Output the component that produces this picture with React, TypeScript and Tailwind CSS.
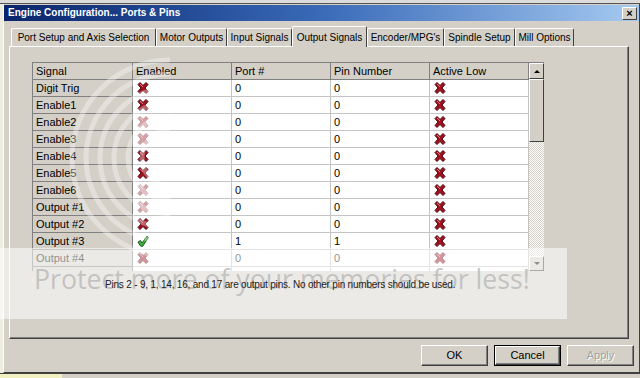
import React from 'react'

type Row = { signal: string; enabled: 'x' | 'ok' | ''; port: string; pin: string; pale?: boolean }

const rows: Row[] = [
  { signal: 'Digit  Trig', enabled: 'x', port: '0', pin: '0' },
  { signal: 'Enable1', enabled: 'x', port: '0', pin: '0' },
  { signal: 'Enable2', enabled: 'x', port: '0', pin: '0', pale: true },
  { signal: 'Enable3', enabled: 'x', port: '0', pin: '0', pale: true },
  { signal: 'Enable4', enabled: 'x', port: '0', pin: '0' },
  { signal: 'Enable5', enabled: 'x', port: '0', pin: '0' },
  { signal: 'Enable6', enabled: 'x', port: '0', pin: '0', pale: true },
  { signal: 'Output #1', enabled: 'x', port: '0', pin: '0', pale: true },
  { signal: 'Output #2', enabled: 'x', port: '0', pin: '0' },
  { signal: 'Output #3', enabled: 'ok', port: '1', pin: '1' },
  { signal: 'Output #4', enabled: 'x', port: '0', pin: '0' },
  { signal: '', enabled: '', port: '', pin: '' },
]

const tabs = [
  { label: 'Port Setup and Axis Selection', w: 'w-[145px]' },
  { label: 'Motor Outputs', w: 'w-[71px]' },
  { label: 'Input Signals', w: 'w-[65px]' },
  { label: 'Output Signals', w: 'w-[75px]', active: true },
  { label: "Encoder/MPG's", w: 'w-[77px]' },
  { label: 'Spindle Setup', w: 'w-[71px]' },
  { label: 'Mill Options', w: 'w-[59px]' },
]

function RedX({ pale }: { pale?: boolean }) {
  return (
    <svg width="12" height="12" viewBox="0 0 12 12" className={pale ? 'opacity-40' : ''}>
      <polygon
        points="1,2.5 3,0.5 6,3.5 9,0.5 11,2.5 8,6 11,9.5 9,11.5 6,8.5 3,11.5 1,9.5 4,6"
        fill="#a3121f"
        stroke="#4a040c"
        strokeWidth="1"
        strokeLinejoin="round"
      />
      <path d="M3 2 L6 5" stroke="#e8707c" strokeWidth="1" />
    </svg>
  )
}

function GreenCheck() {
  return (
    <svg width="12" height="12" viewBox="0 0 12 12">
      <polygon
        points="1,7 3.5,5.5 5,8 10,1 11.5,2.5 5.5,11.5 3.5,11"
        fill="#3fae3f"
        stroke="#1d5e1d"
        strokeWidth="1"
        strokeLinejoin="round"
      />
    </svg>
  )
}

function Button({ label, focused, disabled }: { label: string; focused?: boolean; disabled?: boolean }) {
  return (
    <div className={`w-[67px] h-[21px] ${focused ? 'border border-black' : ''}`}>
      <div
        className={`h-full flex items-center justify-center text-[11px] border border-t-white border-l-white border-r-[#404040] border-b-[#404040] shadow-[inset_-1px_-1px_0_#808080] ${
          disabled ? 'text-[#a0a0a0] [text-shadow:1px_1px_0_#fff]' : 'text-black'
        }`}
      >
        {label}
      </div>
    </div>
  )
}

export default function App() {
  return (
    <div className="relative w-[640px] h-[378px] overflow-hidden bg-[#e8e6e0] font-['Liberation_Sans',Arial,sans-serif] text-black">
      {/* other window behind */}
      <div className="h-[4px] bg-[#dcdcdc] border-b border-[#555]" />

      <div className="flex h-[369px]">
        <div className="w-[3px] bg-[#eeeee0]" />
        {/* dialog */}
        <div className="flex-1 flex flex-col bg-[#d4d0c8] border-l border-white border-r border-r-[#404040] border-b border-b-[#404040]">
          {/* title bar */}
          <div className="h-[16px] mt-[1px] flex items-center justify-between pl-[4px] pr-[2px] bg-gradient-to-r from-[#0a246a] via-[#3a6ab8] to-[#a6caf0]">
            <span className="text-white font-bold text-[10px] leading-none">Engine Configuration... Ports &amp; Pins</span>
            <div className="w-[15px] h-[13px] bg-[#d4d0c8] border border-t-white border-l-white border-r-[#404040] border-b-[#404040] flex items-center justify-center text-[11px] font-bold leading-none">
              ×
            </div>
          </div>

          {/* tabs */}
          <div className="flex pl-[7px] pt-[4px] h-[25px] items-end relative z-10">
            {tabs.map((t) =>
              t.active ? (
                <div
                  key={t.label}
                  className={`${t.w} h-[21px] -mb-[1px] bg-[#d4d0c8] border-t border-l border-white border-r border-r-[#404040] rounded-t-[2px] flex items-start justify-center pt-[3px] text-[10px] whitespace-nowrap`}
                >
                  {t.label}
                </div>
              ) : (
                <div
                  key={t.label}
                  className={`${t.w} h-[18px] border-t border-l border-white border-r border-r-[#404040] rounded-t-[2px] flex items-center justify-center text-[10px] whitespace-nowrap`}
                >
                  {t.label}
                </div>
              )
            )}
          </div>

          {/* tab panel */}
          <div className="ml-[5px] w-[620px] h-[293px] border-t border-l border-white border-r border-r-[#404040] border-b border-b-[#404040] shadow-[inset_-1px_-1px_0_#808080] pl-[22px] pt-[15px] flex flex-col">
            <div className="flex w-[512px] h-[209px] border-t border-l border-[#808080]">
              <div className="w-[496px] h-full overflow-hidden">
                <div className="grid grid-cols-[100px_99px_99px_99px_99px] text-[11px] leading-none">
                  {['Signal', 'Enabled', 'Port #', 'Pin Number', 'Active Low'].map((h) => (
                    <div key={h} className="h-[17px] flex items-center pl-[3px] bg-[#d4d0c8] border-r border-b border-[#808080]">
                      {h}
                    </div>
                  ))}
                  {rows.map((r, i) => (
                    <React.Fragment key={i}>
                      <div className="h-[17px] flex items-center pl-[3px] bg-[#d4d0c8] border-r border-b border-[#808080]">
                        {r.signal}
                      </div>
                      <div className="h-[17px] flex items-center pl-[4px] bg-white border-r border-b border-[#c4c4c4]">
                        {r.enabled === 'ok' ? <GreenCheck /> : r.enabled === 'x' ? <RedX pale={r.pale} /> : null}
                      </div>
                      <div className="h-[17px] flex items-center pl-[3px] bg-white border-r border-b border-[#c4c4c4]">{r.port}</div>
                      <div className="h-[17px] flex items-center pl-[3px] bg-white border-r border-b border-[#c4c4c4]">{r.pin}</div>
                      <div className="h-[17px] flex items-center pl-[4px] bg-white border-r border-b border-[#c4c4c4]">
                        {r.signal ? <RedX /> : null}
                      </div>
                    </React.Fragment>
                  ))}
                </div>
              </div>
              {/* scrollbar */}
              <div className="w-[15px] h-full flex flex-col">
                <div className="h-[16px] bg-[#d4d0c8] border border-t-white border-l-white border-r-[#404040] border-b-[#404040] flex items-center justify-center">
                  <div className="w-0 h-0 border-l-[3px] border-r-[3px] border-b-[3px] border-l-transparent border-r-transparent border-b-black" />
                </div>
                <div className="h-[63px] bg-[#d4d0c8] border border-t-white border-l-white border-r-[#404040] border-b-[#404040]" />
                <div className="flex-1 bg-[repeating-conic-gradient(#d4d0c8_0_25%,#ffffff_0_50%)] bg-[length:2px_2px]" />
                <div className="h-[15px] bg-[#d4d0c8] border border-t-white border-l-white border-r-[#404040] border-b-[#404040] flex items-center justify-center">
                  <div className="w-0 h-0 border-l-[3px] border-r-[3px] border-t-[3px] border-l-transparent border-r-transparent border-t-black" />
                </div>
              </div>
            </div>
          </div>

          {/* buttons */}
          <div className="flex justify-end gap-[6px] pr-[5px] pt-[6px]">
            <Button label="OK" />
            <Button label="Cancel" focused />
            <Button label="Apply" disabled />
          </div>
        </div>
      </div>

      {/* window underneath */}
      <div className="h-[5px] bg-[#d4d0c8] border-t border-[#404040] flex overflow-hidden text-[11px] leading-none">
        <div className="w-[62px] bg-[#f0f0c0]" />
      </div>

      {/* photobucket watermark */}
      <svg className="absolute left-0 top-0 pointer-events-none" width="640" height="378">
        {[28, 42, 56, 70, 84, 98].map((r) => (
          <path key={r} d={`M170 ${158 - r} A ${r} ${r} 0 0 0 170 ${158 + r}`} fill="none" stroke="#ffffff" strokeOpacity="0.35" strokeWidth="5" />
        ))}
      </svg>
      <div className="absolute left-0 top-[248px] w-[567px] h-[71px] bg-white/55 pointer-events-none flex items-start pl-[34px] pt-[18px]">
        <span className="font-['Open_Sans',sans-serif] text-[26.7px] leading-none text-[#b8b8b8]/80 whitespace-nowrap">
          Protect more of your memories for less!
        </span>
      </div>
      {/* status line sits over the band, as in the reference */}
      <div className="absolute left-[105px] top-[280px] text-[10px] leading-none text-[#222] tracking-[-0.2px] whitespace-nowrap">
        Pins 2 - 9, 1, 14, 16, and 17 are output pins. No other pin numbers should be used.
      </div>
    </div>
  )
}
